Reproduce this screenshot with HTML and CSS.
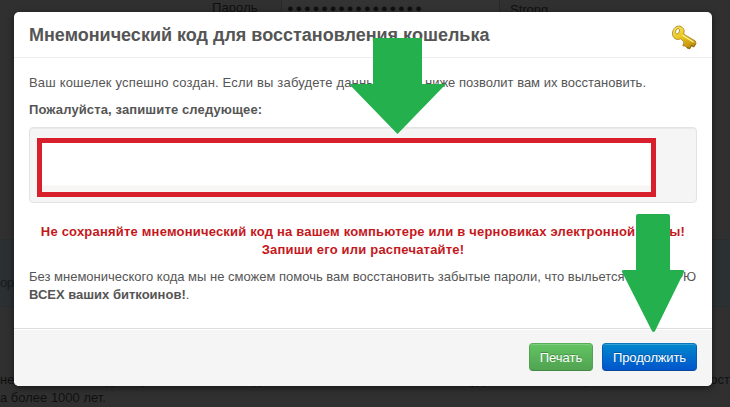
FILE: index.html
```
<!DOCTYPE html>
<html lang="ru">
<head>
<meta charset="utf-8">
<title>Мнемонический код</title>
<link rel="stylesheet" href="styles.css">
</head>
<body>
<div class="page">
  <div class="form-row"><span class="label">Пароль</span><span class="field">●●●●●●●●●●●●●●●●</span><span class="strength">Strong</span></div>
  <div class="band"><span>оро</span></div>
  <div class="note"><p class="line"><span>нее 10 символов для "криптостойкого" на длине</span><span>будет сложнее, она решит не в безопасност</span></p><p>а более 1000 лет.</p></div>
</div>
<div class="modal">
  <header class="head">
    <h3>Мнемонический код для восстановления кошелька</h3>
    <svg class="key" width="26" height="25" viewBox="0 0 26 25">
      <defs><linearGradient id="gold" x1="0" y1="0" x2="0.5" y2="1"><stop offset="0" stop-color="#f8e75c"/><stop offset=".55" stop-color="#eac51f"/><stop offset="1" stop-color="#c3920f"/></linearGradient></defs>
      <path d="M5 1.8C8.500 -.2 12.500 2.100 13.200 5.6L12.8 9.2 24.3 15.9 25 18.6 22.9 22.100 20.6 20.7 18.8 23.9 16.2 23.2 14.8 21.3 11.8 20.8 13 17 9.7 13.8C6.7 15.500 2.9 14 1.700 10.4.8 7.300 2.100 3.8 5 1.8Z" fill="url(#gold)" stroke="#a47f20" stroke-width=".8" stroke-linejoin="round"/>
      <ellipse cx="6.5" cy="6.3" rx="1.8" ry="2.9" transform="rotate(22 6.5 6.3)" fill="#fff" stroke="#a9851b" stroke-width=".8"/>
      <path d="M11.500 10.2 22.5 17.2" stroke="#fff58c" stroke-width="1.3"/>
      <path d="M16 22.5 18.6 23.4 20.6 20.2 22.6 21.6 24.5 19" fill="none" stroke="#805b0b" stroke-width=".8"/>
    </svg>
  </header>
  <main class="body">
    <p class="intro"><span>Ваш кошелек успешно создан. Если вы забудете данные, код</span><span class="tail">ниже позволит вам их восстановить.</span></p>
    <p class="ask">Пожалуйста, запишите следующее:</p>
    <div class="well"><div class="code"></div></div>
    <p class="warning">Не сохраняйте мнемонический код на вашем компьютере или в черновиках электронной почты!<br>Запиши его или распечатайте!</p>
    <p class="loss">Без мнемонического кода мы не сможем помочь вам восстановить забытые пароли, что выльется <span class="lost">в ПОТЕРЮ</span><br><b>ВСЕХ ваших биткоинов!</b>.</p>
  </main>
  <footer class="foot"><button class="btn print">Печать</button><button class="btn next">Продолжить</button></footer>
</div>
<svg class="arrows" width="730" height="407" viewBox="0 0 730 407">
  <path d="M373 38H422V84H446L397.5 134 349 84H373Z"/>
  <path d="M638 214H668Q670 214 670 216V270H682Q685 270 684 272L655 331Q653.500 333 652 331L622 272Q621 270 624 270H636V216Q636 214 638 214Z"/>
</svg>
</body>
</html>
```
FILE: styles.css
```
* { box-sizing: border-box; }
body { margin: 0; width: 730px; height: 407px; overflow: hidden; position: relative; background: #303030; font: 13px/18px "Liberation Sans", Arial, sans-serif; color: #555; }
p, h3 { margin: 0; }
.page { width: 730px; height: 407px; display: flex; flex-direction: column; color: #101010; }
.form-row { height: 242px; display: flex; padding-left: 212px; line-height: 16px; }
.label { width: 69px; letter-spacing: .1px; }
.field { width: 219px; height: 28px; padding-left: 5px; background: #333; border: 1px solid #292929; border-top: 0; font-size: 11px; letter-spacing: 1.9px; line-height: 17px; margin-right: 10px; white-space: nowrap; }
.strength { line-height: 20px; }
.band { height: 68px; background: #2b3033; border-top: 1px solid #282d30; border-bottom: 1px solid #282d30; color: #171b1d; padding-top: 34px; margin-bottom: 64px; }
.band span { letter-spacing: -.5px; }
.note { white-space: nowrap; }
.line { display: flex; justify-content: space-between; }
.modal { position: absolute; left: 14px; top: 12px; width: 698px; height: 374px; display: flex; flex-direction: column; background: #fff; border-radius: 5px; overflow: hidden; box-shadow: 0 2px 7px rgba(0,0,0,.55); }
.head { height: 46px; flex: none; display: flex; justify-content: space-between; padding: 0 15px; border-bottom: 1px solid #eee; }
.head h3 { font-size: 18px; line-height: 46px; color: #555; }
.key { margin-top: 13px; }
.body { flex: 1; padding: 16px 15px 0; }
.body p { height: 27px; white-space: nowrap; }
.intro { width: 617px; display: flex; justify-content: space-between; letter-spacing: .18px; }
.tail { letter-spacing: 0; }
.ask { font-weight: bold; letter-spacing: .12px; }
.well { height: 76px; padding: 10px 7px; margin: -1px 0 20px; background: #f5f5f5; border: 1px solid #e3e3e3; border-radius: 4px; box-shadow: inset 0 1px 1px rgba(0,0,0,.05); }
.code { width: 619px; height: 59px; border: 5px solid #d8202c; background: linear-gradient(#fff 0 42px, #f8f5f5 43px); }
.body .warning { height: 45px; text-align: center; color: #c4181c; font-weight: bold; letter-spacing: .2px; }
.body .loss { height: 40px; }
.lost { letter-spacing: -.05px; }
.foot { height: 58px; flex: none; display: flex; justify-content: flex-end; gap: 9px; padding: 14px 15px; background: #f5f5f5; border-top: 1px solid #ddd; box-shadow: inset 0 1px 0 #fff; }
.btn { height: 28px; padding: 1px 0 0; border: 1px solid; border-radius: 4px; color: #fff; font: 13px/18px "Liberation Sans", Arial, sans-serif; text-shadow: 0 -1px 0 rgba(0,0,0,.25); box-shadow: inset 0 1px 0 rgba(255,255,255,.2); }
.print { width: 64px; background: linear-gradient(#62c462, #51a351); border-color: #55ad55 #51a351 #438943; }
.next { width: 95px; letter-spacing: -.15px; background: linear-gradient(#0088cc, #0055cc); border-color: #0878bd #0759b5 #06489c; }
.arrows { position: absolute; left: 0; top: 0; fill: #24b14d; }
```
